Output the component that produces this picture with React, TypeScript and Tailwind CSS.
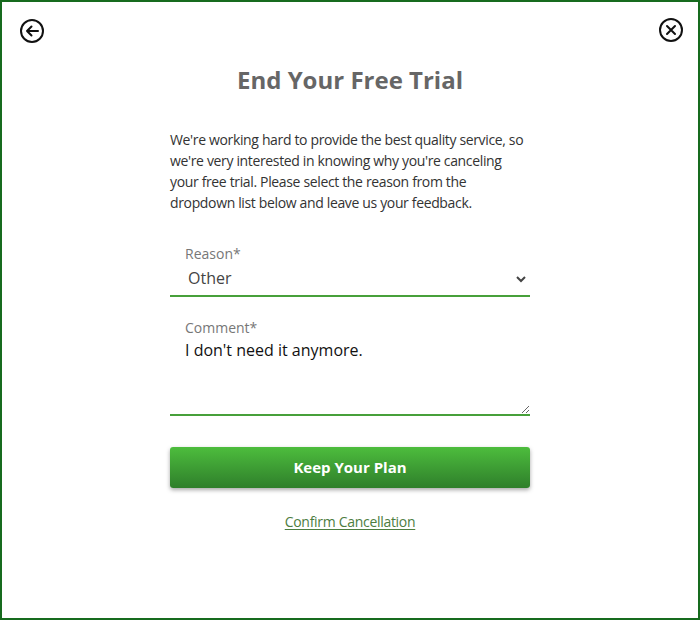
import { useState } from 'react';

const font = { fontFamily: '"Open Sans", "Noto Sans", sans-serif' };

function BackIcon() {
    return (
        <svg width="26" height="26" viewBox="0 0 26 26" fill="none" stroke="#111" strokeWidth="2">
            <circle cx="13" cy="13" r="11" />
            <path d="M19 13H8M12.5 8.5L8 13l4.5 4.5" strokeLinecap="round" strokeLinejoin="round" />
        </svg>
    );
}

function CloseIcon() {
    return (
        <svg width="26" height="26" viewBox="0 0 26 26" fill="none" stroke="#111" strokeWidth="2">
            <circle cx="13" cy="13" r="11" />
            <path d="M9 9l8 8M17 9l-8 8" strokeLinecap="round" />
        </svg>
    );
}

export default function App() {
    const [reason, setReason] = useState('Other');
    const [comment, setComment] = useState("I don't need it anymore.");

    return (
        <div style={font} className="w-[700px] h-[620px] border-2 border-[#176b1e] bg-white flex flex-col">
            <div className="flex justify-between pl-[17px] pr-[14px] pt-[16px]">
                <button className="w-[26px] h-[26px]"><BackIcon /></button>
                <button className="w-[26px] h-[26px] -mt-[1px]"><CloseIcon /></button>
            </div>

            <div className="w-[360px] mx-auto flex flex-col">
                <h1 className="text-center text-[24px] font-bold text-[#666] leading-[32px] mt-[20px]">End Your Free Trial</h1>

                <p className="mt-[33px] text-[14px] leading-[21px] text-[#333] tracking-[-0.35px]">
                    We're working hard to provide the best quality service, so we're very interested in knowing why you're canceling your free trial. Please select the reason from the dropdown list below and leave us your feedback.
                </p>

                <label className="mt-[32px] block border-b-2 border-[#47a03a]">
                    <span className="block pl-[15px] text-[14px] leading-[18px] text-[#777]">Reason*</span>
                    <div className="relative">
                        <select
                            value={reason}
                            onChange={(e) => setReason(e.target.value)}
                            className="w-full appearance-none bg-transparent pl-[18px] pr-8 h-[32px] pb-[2px] text-[16px] text-[#444] outline-none"
                        >
                            <option>Too expensive</option>
                            <option>Missing features</option>
                            <option>Other</option>
                        </select>
                        <svg className="absolute right-[4px] top-[13px] pointer-events-none" width="10" height="7" viewBox="0 0 10 7" fill="none" stroke="#444" strokeWidth="2">
                            <path d="M1 1l4 4 4-4" />
                        </svg>
                    </div>
                </label>

                <label className="mt-[22px] block border-b-2 border-[#47a03a]">
                    <span className="block pl-[15px] text-[14px] leading-[18px] text-[#777]">Comment*</span>
                    <textarea
                        value={comment}
                        onChange={(e) => setComment(e.target.value)}
                        className="block w-full h-[77px] pt-[2px] pl-[15px] text-[16px] leading-[22px] text-[#111] outline-none resize-y"
                    />
                </label>

                <button className="mt-[31px] h-[41px] rounded-[3px] bg-gradient-to-b from-[#4dbd3d] to-[#2f7f2b] text-white font-bold text-[15px] shadow-[0_2px_4px_rgba(0,0,0,0.35)]">
                    Keep Your Plan
                </button>

                <a href="#" className="mt-[24px] self-center text-[14px] leading-[20px] text-[#4d7d3f] underline underline-offset-2 tracking-[-0.3px]">
                    Confirm Cancellation
                </a>
            </div>
        </div>
    );
}
